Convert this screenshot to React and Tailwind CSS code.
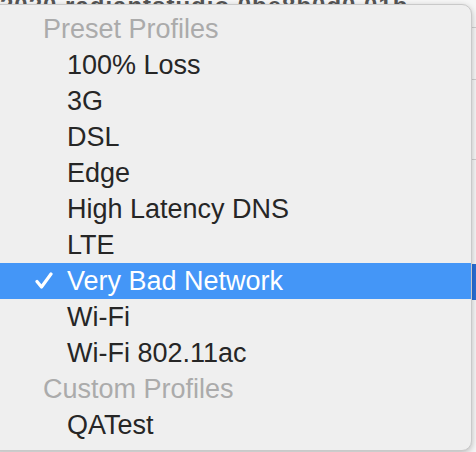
import React from "react";

const items = [
  { type: "header", label: "Preset Profiles" },
  { label: "100% Loss" },
  { label: "3G" },
  { label: "DSL" },
  { label: "Edge" },
  { label: "High Latency DNS" },
  { label: "LTE" },
  { label: "Very Bad Network", selected: true },
  { label: "Wi-Fi" },
  { label: "Wi-Fi 802.11ac" },
  { type: "header", label: "Custom Profiles" },
  { label: "QATest" },
];

export default function App() {
  return (
    <div
      className="relative w-[476px] h-[452px] overflow-hidden bg-[#f6f6f6] flex flex-col"
      style={{ fontFamily: '"Liberation Sans", Arial, sans-serif' }}
    >
      {/* background window content */}
      <div className="h-[4px] overflow-hidden flex items-end">
        <div className="whitespace-nowrap text-[24px] leading-[24px] font-bold text-[#555] tracking-[1px] mb-[-14px]">
          2020 radiantstudio 0be8b0d0 01b
        </div>
      </div>
      <div className="flex-1 flex justify-end">
        <div className="w-[6px] flex flex-col">
          <div className="h-[24px] border-b border-[#cfcfcf]" />
          <div className="h-[52px] border-b border-[#cfcfcf]" />
          <div className="h-[80px] border-b border-[#cfcfcf]" />
          <div className="h-[56px]" />
          <div className="h-[48px]" />
          <div className="h-[36px] bg-[#2a6fd6]" />
        </div>
      </div>

      {/* menu */}
      <div className="absolute left-[-10px] top-[4px] w-[482px] h-[447px] rounded-[10px] bg-[#efefef] border border-[#c9c9c9] shadow-[0_2px_6px_rgba(0,0,0,0.25)] pt-[6px] overflow-hidden flex flex-col">
        {items.map((it, i) =>
          it.type === "header" ? (
            <div
              key={i}
              className="h-[36px] flex items-center pl-[52px] text-[27px] text-[#ababab]"
            >
              {it.label}
            </div>
          ) : (
            <div
              key={i}
              className={
                it.selected
                  ? "h-[36px] flex items-center pl-[44px] text-[27px] text-white bg-[#4496f7]"
                  : "h-[36px] flex items-center pl-[76px] text-[27px] text-[#262626]"
              }
            >
              {it.selected && (
                <svg
                  className="mr-[14px]"
                  width="18"
                  height="18"
                  viewBox="0 0 18 18"
                >
                  <path
                    d="M2 9.5 L6.5 15 L16 2"
                    fill="none"
                    stroke="white"
                    strokeWidth="3.2"
                    strokeLinecap="round"
                    strokeLinejoin="round"
                  />
                </svg>
              )}
              {it.label}
            </div>
          )
        )}
      </div>
    </div>
  );
}
